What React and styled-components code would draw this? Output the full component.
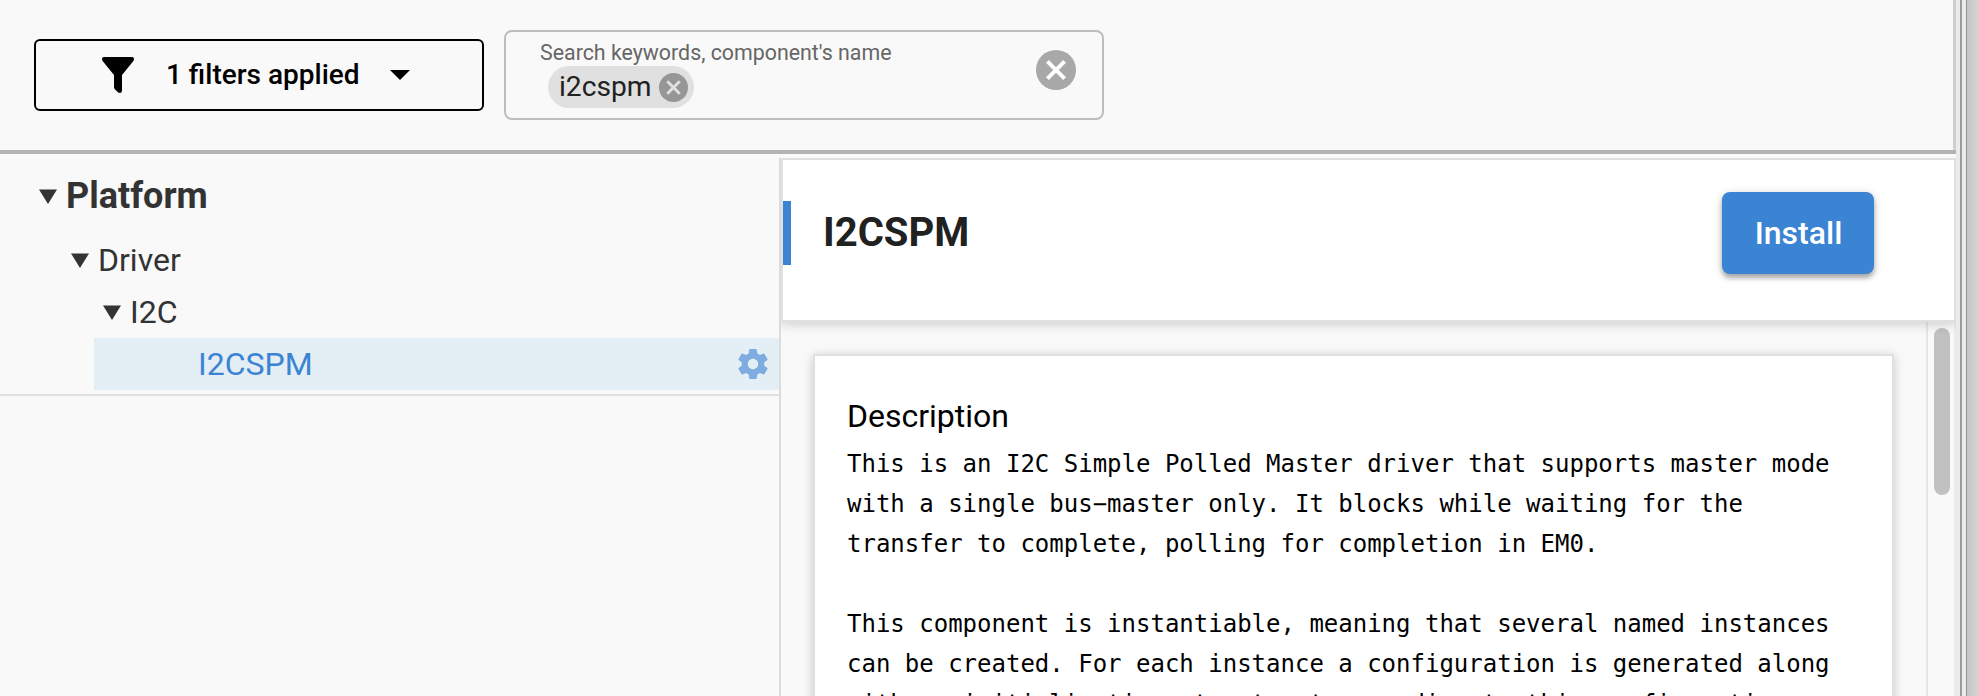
import React from "react";
import styled, { createGlobalStyle } from "styled-components";

const GlobalStyle = createGlobalStyle`
  *, *::before, *::after { box-sizing: border-box; }
  html, body { margin: 0; height: 100%; overflow: hidden; }
  body { background: #f9f9f9; font-family: Roboto, "Liberation Sans", sans-serif; color: #000; }
  button { font: inherit; border: 0; margin: 0; padding: 0; background: none; color: inherit; }
`;

const Window = styled.div`
  display: flex;
  width: 1978px;
  height: 696px;
  overflow: hidden;
`;

const Content = styled.main`
  width: 1956px;
  display: flex;
  flex-direction: column;
`;

const Toolbar = styled.header`
  flex: none;
  height: 154px;
  border-bottom: 4px solid #b3b3b3;
  display: flex;
`;

const ToolbarBody = styled.div`
  flex: 1;
  display: flex;
  align-items: center;
  gap: 20px;
  padding-left: 34px;
  border-right: 3px solid #cfcfcf;
`;

const FilterButton = styled.button`
  width: 450px;
  height: 72px;
  border: 2px solid #000;
  border-radius: 6px;
  display: flex;
  align-items: center;
  padding-left: 66px;
  font-size: 28px;
  font-weight: 500;
  line-height: 32px;
`;

const FilterLabel = styled.span`
  width: 193px;
  margin: 0 31px 0 32px;
  white-space: nowrap;
`;

const SearchField = styled.div`
  width: 600px;
  height: 90px;
  border: 2px solid #bdbdbd;
  border-radius: 8px;
  display: flex;
  align-items: flex-start;
  justify-content: space-between;
  padding: 8px 26px 0 34px;
`;

const SearchLabel = styled.div`
  margin-bottom: 1px;
  font-size: 21.36px;
  line-height: 25px;
  color: #666;
  white-space: nowrap;
`;

const Chip = styled.div`
  width: 146px;
  height: 42px;
  margin-left: 8px;
  border-radius: 21px;
  background: #e0e0e0;
  color: #212121;
  display: flex;
  align-items: center;
  justify-content: space-between;
  padding: 0 6px 0 11px;
  font-size: 28.2px;
  line-height: 32px;
`;

const ClearSlot = styled.button`
  display: flex;
  margin-top: 10px;
`;

const Body = styled.div`
  flex: 1;
  min-height: 0;
  display: flex;
  padding-top: 4px;
`;

const Tree = styled.nav`
  width: 779px;
  height: 238px;
  padding-top: 12px;
  border-bottom: 2px solid #e0e0e0;
  color: #333;
`;

const TreeRow = styled.div`
  height: 52px;
  margin-bottom: ${(p) => (p.$root ? 12 : 0)}px;
  padding-left: ${(p) => p.$indent}px;
  display: flex;
  align-items: center;
  gap: 9px;
  font-size: ${(p) => (p.$root ? 36 : 32)}px;
  font-weight: ${(p) => (p.$root ? 700 : 400)};
  line-height: 40px;
`;

const SelectedRow = styled.div`
  height: 52px;
  margin-left: 94px;
  padding: 0 8px 0 104px;
  display: flex;
  align-items: center;
  justify-content: space-between;
  background: #e4eef5;
  color: #3b84d4;
  font-size: 32px;
  line-height: 40px;
`;

const Detail = styled.section`
  flex: 1;
  min-width: 0;
  display: flex;
  flex-direction: column;
  border-left: 2px solid #dcdcdc;
`;

const TitleCard = styled.div`
  flex: none;
  position: relative;
  z-index: 1;
  height: 164px;
  display: flex;
  align-items: flex-start;
  background: #fff;
  border: 2px solid #e0e0e0;
  box-shadow: 0 3px 10px rgba(0, 0, 0, 0.16);
  clip-path: inset(0 0 -20px 0);
`;

const Accent = styled.div`
  width: 8px;
  height: 64px;
  margin-top: 41px;
  background: #3b84d4;
`;

const Title = styled.h1`
  flex: 1;
  margin: 49px 0 0 32px;
  color: #212121;
  font-size: 40px;
  font-weight: 700;
  line-height: 48px;
`;

const InstallButton = styled.button`
  width: 152px;
  height: 82px;
  margin: 32px 80px 0 0;
  padding-left: 1px;
  border-radius: 8px;
  background: #3b84d4;
  color: #fff;
  font-size: 32px;
  font-weight: 500;
  line-height: 82px;
  box-shadow: 0 2px 10px rgba(0, 0, 0, 0.2), 0 4px 4px rgba(0, 0, 0, 0.24);
`;

const ScrollArea = styled.div`
  flex: 1;
  min-height: 0;
  display: flex;
`;

const ScrollContent = styled.div`
  flex: 1;
  overflow: hidden;
  padding: 32px 32px 0;
`;

const DescriptionCard = styled.article`
  height: 500px;
  padding: 40px 30px 0 32px;
  background: #fff;
  border: 2px solid #e0e0e0;
  box-shadow: 0 2px 10px rgba(0, 0, 0, 0.2);
`;

const DescriptionHeading = styled.h2`
  margin: 0;
  font-size: 32px;
  font-weight: 400;
  line-height: 40px;
`;

const DescriptionText = styled.pre`
  margin: 8px 0 0;
  font-family: "DejaVu Sans Mono", "Liberation Mono", monospace;
  font-size: 24px;
  line-height: 40px;
`;

const ScrollTrack = styled.div`
  width: 28px;
  padding: 6px 4px 0 6px;
  border-left: 2px solid #e6e6e6;
`;

const ScrollThumb = styled.div`
  width: 16px;
  height: 167px;
  border-radius: 8px;
  background: #c1c1c1;
`;

const PaneEdge = styled.div`
  width: 2px;
  background: #ebebeb;
`;

const Frame = styled.aside`
  width: 22px;
  display: flex;
`;

const FrameStripe = styled.div`
  width: ${(p) => p.$width}px;
  background: ${(p) => p.$fill};
`;

const FunnelIcon = () => (
  <svg width="32" height="36" viewBox="0 0 32 36">
    <path d="M2 0H30Q32 0 32 2Q32 3.2 31.2 4.2L20 18V33.5Q20 36 17.8 36Q16.8 36 16 35.3L13 32.4Q12 31.4 12 30V18L.8 4.2Q0 3.2 0 2Q0 0 2 0Z" />
  </svg>
);

const CaretIcon = () => (
  <svg width="20" height="10" viewBox="0 0 20 10">
    <path d="M0 0H20L10 10Z" />
  </svg>
);

const TreeArrow = () => (
  <svg width="18" height="15" viewBox="0 0 18 15">
    <path fill="#333" d="M0 .4H18L9 15Z" />
  </svg>
);

const CloseIcon = ({ size, fill, cross }) => (
  <svg width={size} height={size} viewBox="2 2 20 20">
    <circle cx="12" cy="12" r="10" fill={fill} />
    <path
      fill={cross}
      d="M17 15.59 15.59 17 12 13.41 8.41 17 7 15.59 10.59 12 7 8.41 8.41 7 12 10.59 15.59 7 17 8.41 13.41 12z"
    />
  </svg>
);

const GearIcon = () => (
  <svg width="36" height="36" viewBox="0 0 24 24">
    <path
      fill="#7eace1"
      d="M19.43 12.98c.04-.32.07-.64.07-.98s-.03-.66-.07-.98l2.11-1.65c.19-.15.24-.42.12-.64l-2-3.46c-.12-.22-.39-.3-.61-.22l-2.49 1c-.52-.4-1.08-.73-1.69-.98l-.38-2.65C14.46 2.18 14.25 2 14 2h-4c-.25 0-.46.18-.49.42l-.38 2.65c-.61.25-1.17.59-1.69.98l-2.49-1c-.23-.09-.49 0-.61.22l-2 3.46c-.13.22-.07.49.12.64l2.11 1.65c-.04.32-.07.65-.07.98s.03.66.07.98l-2.11 1.65c-.19.15-.24.42-.12.64l2 3.46c.12.22.39.3.61.22l2.49-1c.52.4 1.08.73 1.69.98l.38 2.65c.03.24.24.42.49.42h4c.25 0 .46-.18.49-.42l.38-2.65c.61-.25 1.17-.59 1.69-.98l2.49 1c.23.09.49 0 .61-.22l2-3.46c.12-.22.07-.49-.12-.64l-2.11-1.65zM12 15.5c-1.93 0-3.5-1.57-3.5-3.5s1.57-3.5 3.5-3.5 3.5 1.57 3.5 3.5-1.57 3.5-3.5 3.5z"
    />
  </svg>
);

const DESCRIPTION = `This is an I2C Simple Polled Master driver that supports master mode
with a single bus\u2212master only. It blocks while waiting for the
transfer to complete, polling for completion in EM0.

This component is instantiable, meaning that several named instances
can be created. For each instance a configuration is generated along
with an initialization struct set according to this configuration.`;

export default function App() {
  return (
    <>
      <GlobalStyle />
      <Window>
        <Content>
          <Toolbar>
            <ToolbarBody>
              <FilterButton>
                <FunnelIcon />
                <FilterLabel>1 filters applied</FilterLabel>
                <CaretIcon />
              </FilterButton>
              <SearchField>
                <div>
                  <SearchLabel>Search keywords, component's name</SearchLabel>
                  <Chip>
                    i2cspm
                    <CloseIcon size={29} fill="#969696" cross="#e0e0e0" />
                  </Chip>
                </div>
                <ClearSlot aria-label="Clear search">
                  <CloseIcon size={40} fill="#a8a8a8" cross="#fff" />
                </ClearSlot>
              </SearchField>
            </ToolbarBody>
          </Toolbar>
          <Body>
            <Tree>
              <TreeRow $root $indent={39}>
                <TreeArrow />
                Platform
              </TreeRow>
              <TreeRow $indent={71}>
                <TreeArrow />
                Driver
              </TreeRow>
              <TreeRow $indent={103}>
                <TreeArrow />
                I2C
              </TreeRow>
              <SelectedRow>
                I2CSPM
                <GearIcon />
              </SelectedRow>
            </Tree>
            <Detail>
              <TitleCard>
                <Accent />
                <Title>I2CSPM</Title>
                <InstallButton>Install</InstallButton>
              </TitleCard>
              <ScrollArea>
                <ScrollContent>
                  <DescriptionCard>
                    <DescriptionHeading>Description</DescriptionHeading>
                    <DescriptionText>{DESCRIPTION}</DescriptionText>
                  </DescriptionCard>
                </ScrollContent>
                <ScrollTrack>
                  <ScrollThumb />
                </ScrollTrack>
                <PaneEdge />
              </ScrollArea>
            </Detail>
          </Body>
        </Content>
        <Frame>
          <FrameStripe $width={4} $fill="#ebebeb" />
          <FrameStripe $width={2} $fill="#9c9c9c" />
          <FrameStripe $width={4} $fill="#ebebeb" />
          <FrameStripe $width={1} $fill="#969696" />
          <FrameStripe $width={11} $fill="linear-gradient(90deg, #c4c4c4, #d4d4d4)" />
        </Frame>
      </Window>
    </>
  );
}
